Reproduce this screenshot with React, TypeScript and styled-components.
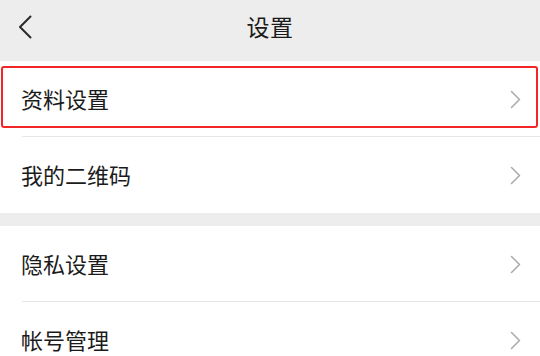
import styled, { createGlobalStyle } from 'styled-components';

const GlobalStyle = createGlobalStyle`
  * {
    box-sizing: border-box;
  }

  body {
    margin: 0;
    background: #ffffff;
    font-family: 'Noto Sans CJK SC', 'Noto Sans', sans-serif;
    color: #1b1b1b;
  }
`;

type TGroup = { items: { label: string; highlighted?: boolean }[] };

const GROUPS: TGroup[] = [
  { items: [{ label: '资料设置', highlighted: true }, { label: '我的二维码' }] },
  { items: [{ label: '隐私设置' }, { label: '帐号管理' }] },
];

export default function App(): JSX.Element {
  return (
    <StyledPage>
      <GlobalStyle />
      <StyledHeader>
        <StyledBackButton type="button" aria-label="返回">
          <svg width="14" height="24" viewBox="0 0 14 24" fill="none">
            <polyline
              points="12.5,1.5 2,12 12.5,22.5"
              stroke="#2a2a2a"
              strokeWidth="2"
              strokeLinecap="round"
              strokeLinejoin="round"
            />
          </svg>
        </StyledBackButton>
        <StyledTitle>设置</StyledTitle>
      </StyledHeader>
      {GROUPS.map((group, gIdx) => (
        <StyledGroup key={gIdx} $first={gIdx === 0}>
          {group.items.map((item, idx) => (
            <StyledRow key={item.label} $highlighted={!!item.highlighted} $last={idx === group.items.length - 1}>
              <StyledLabel>{item.label}</StyledLabel>
              <svg width="11" height="19" viewBox="0 0 11 19" fill="none">
                <polyline
                  points="1.5,1.5 9.5,9.5 1.5,17.5"
                  stroke="#ababab"
                  strokeWidth="1.6"
                  strokeLinecap="round"
                  strokeLinejoin="round"
                />
              </svg>
            </StyledRow>
          ))}
        </StyledGroup>
      ))}
    </StyledPage>
  );
}

const StyledPage = styled.div`
  display: flex;
  flex-direction: column;
  width: 540px;
  height: 356px;
  overflow: hidden;
  background: #ededed;
`;

const StyledHeader = styled.header`
  position: relative;
  display: flex;
  align-items: center;
  justify-content: center;
  flex-shrink: 0;
  height: 61px;
  background: #ededed;
`;

const StyledBackButton = styled.button`
  position: absolute;
  left: 18px;
  top: 15px;
  display: flex;
  padding: 0;
  border: none;
  background: transparent;
  cursor: pointer;
`;

const StyledTitle = styled.h1`
  margin: 0;
  font-size: 23px;
  font-weight: 400;
  line-height: 1;
  letter-spacing: 0.5px;
  padding-bottom: 8px;
`;

const StyledGroup = styled.section<{ $first: boolean }>`
  display: flex;
  flex-direction: column;
  flex-shrink: 0;
  margin-top: ${({ $first }) => ($first ? '0' : '13px')};
  background: #ffffff;
`;

const StyledRow = styled.div<{ $highlighted: boolean; $last: boolean }>`
  position: relative;
  display: flex;
  align-items: center;
  justify-content: space-between;
  height: 76px;
  padding: 0 19px 0 21px;

  &::before {
    content: '';
    position: absolute;
    left: 22px;
    right: 0;
    bottom: 0;
    height: 1px;
    background: ${({ $last }) => ($last ? 'transparent' : '#e6e6e6')};
  }

  &::after {
    content: '';
    display: ${({ $highlighted }) => ($highlighted ? 'block' : 'none')};
    position: absolute;
    top: 5px;
    left: 1px;
    right: 2px;
    bottom: 9px;
    border: 2px solid #f22626;
    border-radius: 3px;
    pointer-events: none;
  }
`;

const StyledLabel = styled.span`
  font-size: 22px;
  line-height: 1;
  color: #1b1b1b;
  padding-bottom: 3px;
`;
